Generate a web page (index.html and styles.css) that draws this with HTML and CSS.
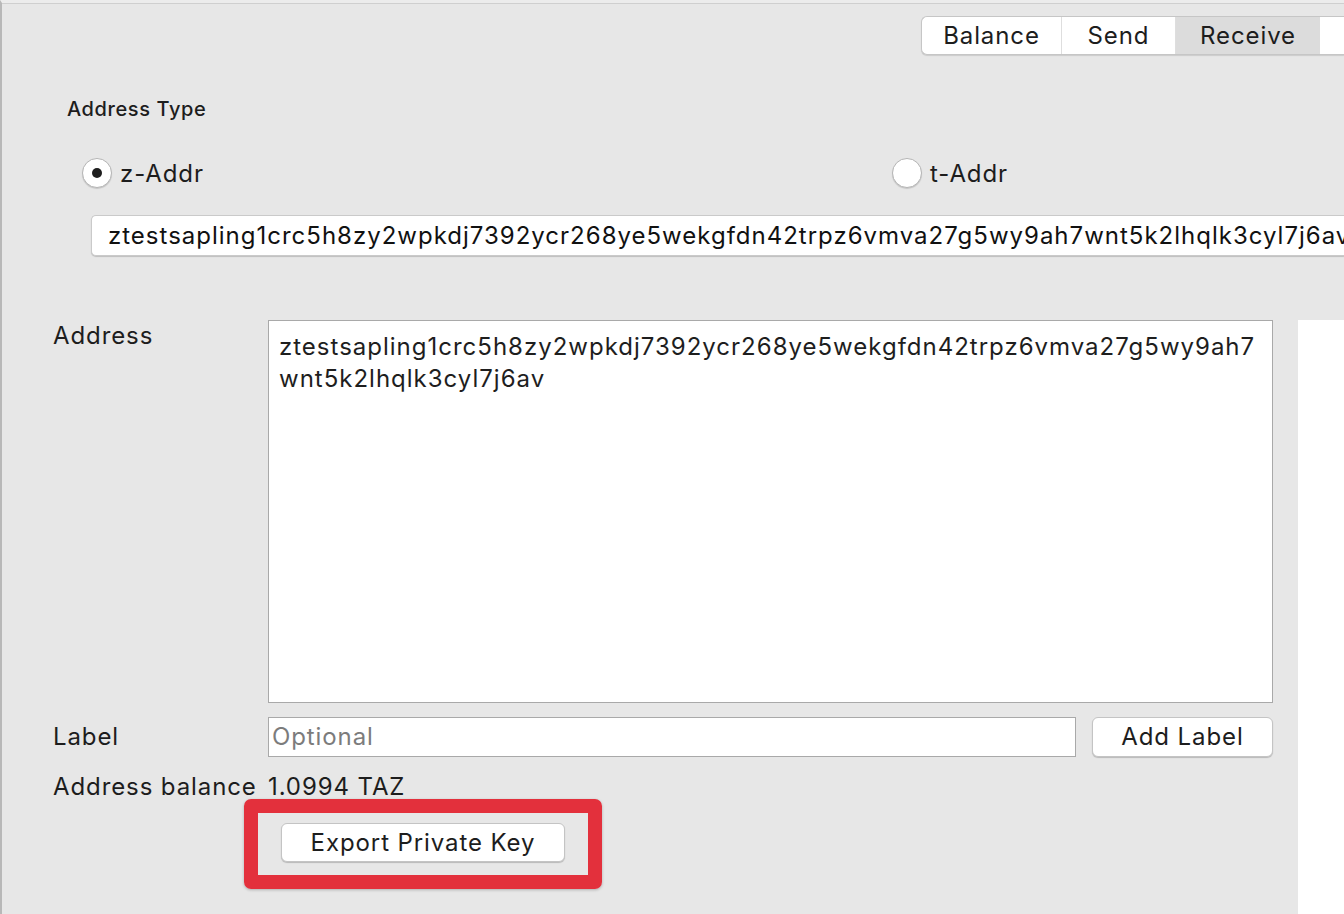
FILE: index.html
```html
<!DOCTYPE html>
<html>
<head>
<meta charset="utf-8">
<link rel="stylesheet" href="styles.css">
</head>
<body>
<div class="window">
  <div class="tabbar">
    <div class="tabs">
      <div class="tab t1">Balance</div>
      <div class="tab t2">Send</div>
      <div class="tab active">Receive</div>
      <div class="tab rest"></div>
    </div>
  </div>
  <div class="group-title">Address Type</div>
  <div class="radios">
    <label class="radio"><span class="dot checked"></span>z-Addr</label>
    <label class="radio"><span class="dot"></span>t-Addr</label>
  </div>
  <div class="combo">ztestsapling1crc5h8zy2wpkdj7392ycr268ye5wekgfdn42trpz6vmva27g5wy9ah7wnt5k2lhqlk3cyl7j6av</div>
  <div class="main">
    <div class="form">
      <div class="lbl lbl-address">Address</div>
      <div class="textarea">ztestsapling1crc5h8zy2wpkdj7392ycr268ye5wekgfdn42trpz6vmva27g5wy9ah7<br>wnt5k2lhqlk3cyl7j6av</div>
      <div class="lbl lbl-label">Label</div>
      <div class="label-row">
        <div class="input">Optional</div>
        <div class="button add">Add Label</div>
      </div>
      <div class="lbl lbl-balance">Address balance</div>
      <div class="balance">1.0994 TAZ</div>
      <div class="spacer"></div>
      <div class="export-wrap">
        <div class="highlight">
          <div class="button export">Export Private Key</div>
        </div>
      </div>
    </div>
    <div class="side"></div>
  </div>
</div>
</body>
</html>
```
FILE: styles.css
```css
html, body {
  margin: 0;
  padding: 0;
  height: 100%;
  background: #e7e7e7;
  font-family: Inter, "Liberation Sans", sans-serif;
  color: #1d1d1d;
  overflow: hidden;
  letter-spacing: 0.9px;
}
.window {
  height: 914px;
  box-sizing: border-box;
  border-top: 3px solid #ececec;
  border-left: 2px solid #b8b8b8;
  display: flex;
  flex-direction: column;
}
.window::before {
  content: "";
  display: block;
  height: 1px;
  background: #cfcfcf;
}
.tabbar {
  display: flex;
  justify-content: flex-end;
  padding-top: 12px;
}
.tabs {
  display: flex;
  height: 39px;
  box-sizing: border-box;
  background: #fff;
  border: 1px solid #c6c6c6;
  border-right: none;
  border-radius: 6px 0 0 6px;
  box-shadow: 0 1px 1px rgba(0,0,0,0.12);
  overflow: hidden;
}
.tab {
  font-size: 24px;
  line-height: 37px;
  border-right: 1px solid #dedede;
  box-sizing: border-box;
  text-align: center;
}
.tab.t1 { width: 140px; }
.tab.t2 { width: 114px; }
.tab.active { background: #dcdcdc; width: 144px; border-right: none; }
.tab.rest { width: 24px; border: none; }
.group-title {
  font-size: 20px;
  font-weight: 500;
  letter-spacing: 0.6px;
  margin-left: 65px;
  margin-top: 41px;
  line-height: 26px;
}
.radios {
  display: flex;
  margin-left: 80px;
  margin-top: 34px;
  height: 34px;
  align-items: center;
}
.radio {
  display: flex;
  align-items: center;
  font-size: 24px;
  gap: 8px;
}
.radio:first-child {
  width: 810px;
  flex: none;
}
.dot {
  width: 28px;
  height: 28px;
  border-radius: 50%;
  border: 1px solid #b5b5b5;
  background: #fff;
  box-shadow: 0 1px 1px rgba(0,0,0,0.15);
  position: relative;
  flex: none;
}
.dot.checked::after {
  content: "";
  position: absolute;
  left: 9px;
  top: 9px;
  width: 10px;
  height: 10px;
  border-radius: 50%;
  background: #1e1e1e;
}
.combo {
  margin-left: 89px;
  margin-top: 25px;
  height: 41px;
  box-sizing: border-box;
  background: #fff;
  border: 1px solid #cacaca;
  border-right: none;
  border-radius: 5px 0 0 5px;
  box-shadow: 0 1px 1px rgba(0,0,0,0.18);
  font-size: 24px;
  letter-spacing: 1px;
  line-height: 39px;
  padding-left: 16px;
  white-space: nowrap;
  overflow: hidden;
  color: #111;
}
.main {
  display: flex;
  margin-top: 64px;
  flex: 1;
}
.form {
  width: 1296px;
  flex: none;
  box-sizing: border-box;
  padding-left: 51px;
  padding-right: 25px;
  display: grid;
  grid-template-columns: 215px 1fr;
  grid-template-rows: 383px auto auto auto;
  align-content: start;
}
.side {
  flex: 1;
  background: #fff;
}
.lbl {
  font-size: 24px;
  line-height: 40px;
  white-space: nowrap;
}
.lbl-address { line-height: 32px; }
.textarea {
  background: #fff;
  border: 1px solid #a9a9a9;
  font-size: 24px;
  letter-spacing: 1px;
  line-height: 32px;
  padding: 10px 10px;
  box-sizing: border-box;
  color: #1e1e1e;
}
.lbl-label, .label-row { margin-top: 14px; }
.label-row {
  display: flex;
  gap: 16px;
}
.input {
  width: 808px;
  height: 40px;
  box-sizing: border-box;
  background: #fff;
  border: 1px solid #a9a9a9;
  color: #7c7c7c;
  font-size: 24px;
  line-height: 38px;
  padding-left: 3px;
}
.button {
  background: #fff;
  border: 1px solid #c4c4c4;
  border-radius: 6px;
  box-shadow: 0 1px 1px rgba(0,0,0,0.2);
  font-size: 24px;
  text-align: center;
  box-sizing: border-box;
}
.button.add {
  width: 181px;
  height: 40px;
  line-height: 38px;
}
.lbl-balance, .balance {
  margin-top: 10px;
}
.balance {
  font-size: 24px;
  line-height: 40px;
}
.export-wrap {
  margin-left: -24px;
  margin-top: -8px;
}
.highlight {
  width: 358px;
  height: 90px;
  box-sizing: border-box;
  border: 14px solid #e3303c;
  border-radius: 7px;
  box-shadow: 0 1px 3px rgba(0,0,0,0.25);
  padding: 10px 0 0 23px;
}
.button.export {
  width: 284px;
  height: 39px;
  line-height: 37px;
}
```
